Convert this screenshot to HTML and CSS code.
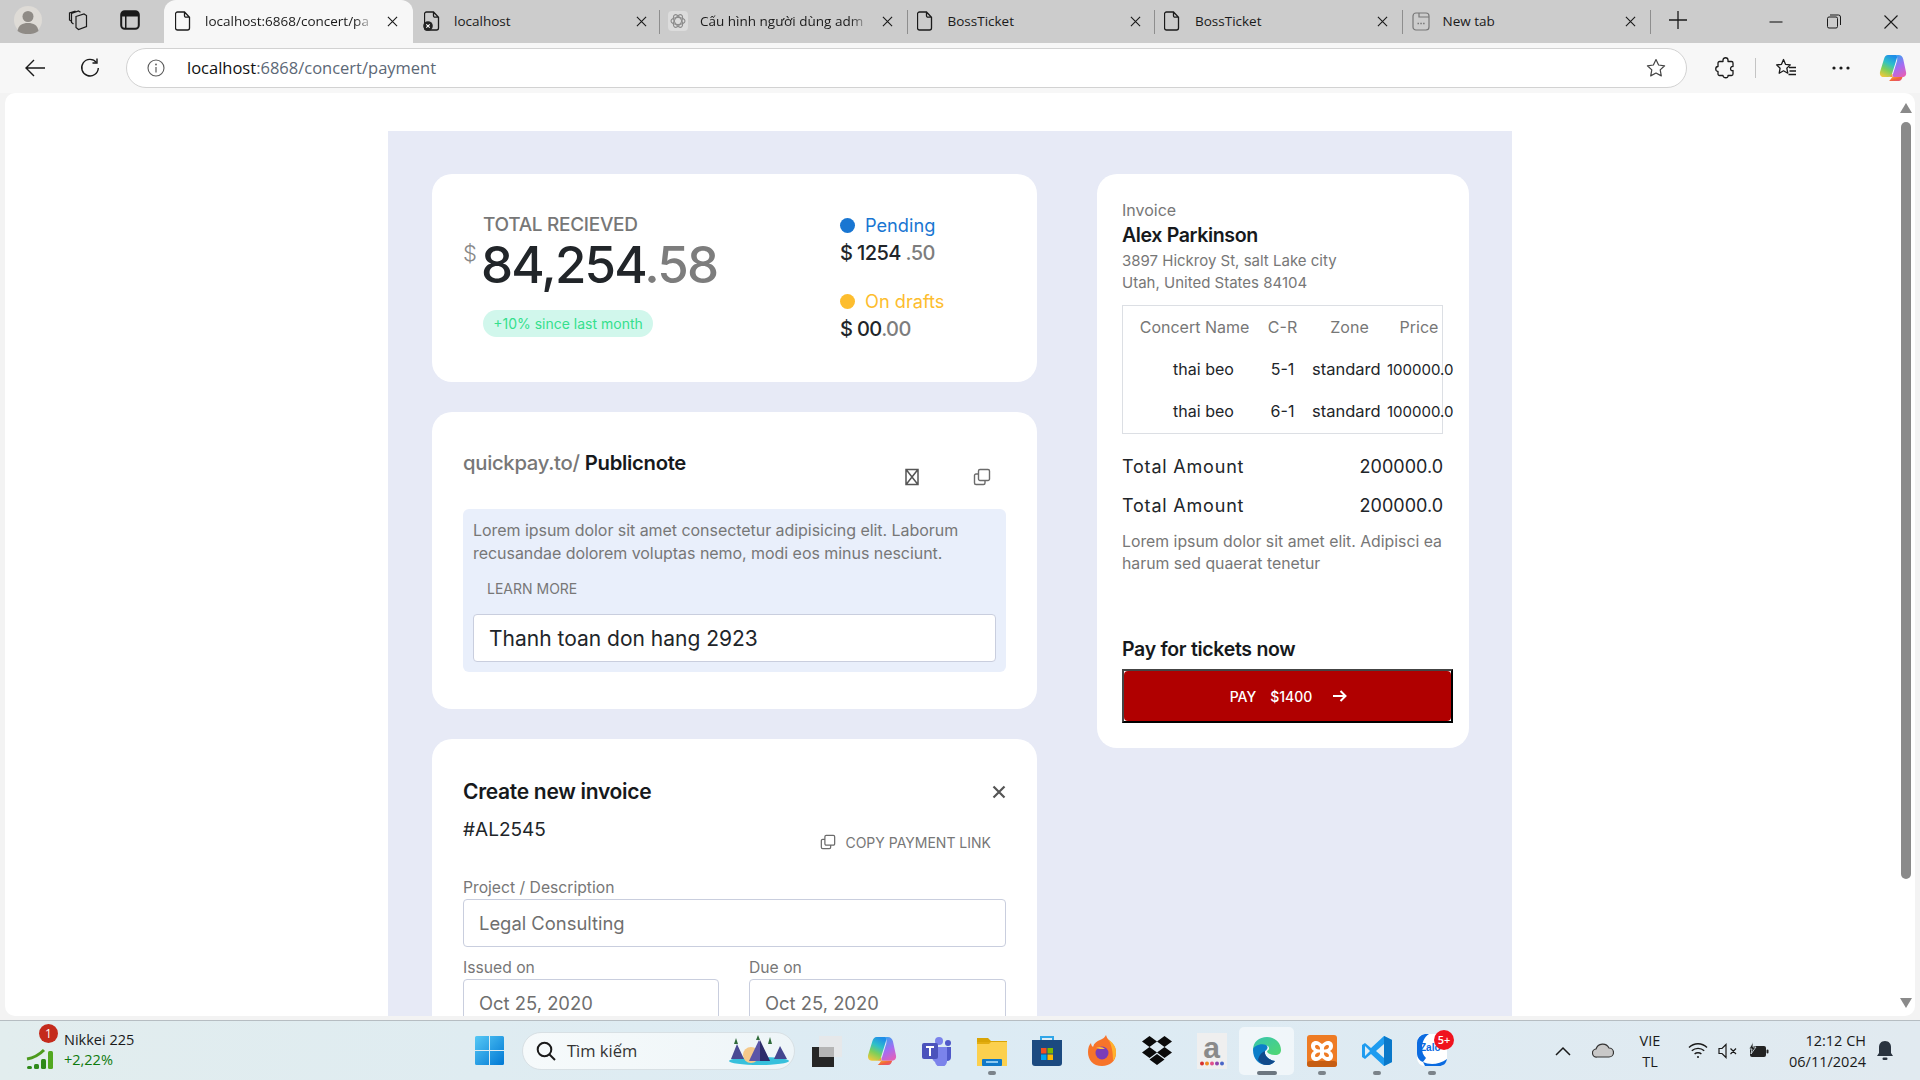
FILE: index.html
```html
<!DOCTYPE html>
<html lang="vi">
<head>
<meta charset="utf-8">
<title>BossTicket</title>
<link rel="stylesheet" href="styles.css">
</head>
<body>
<svg class="defs" width="0" height="0">
  <symbol id="doc" viewBox="0 0 16 20"><path d="M2.5 1h7l5 5.2v10.8a2 2 0 0 1-2 2h-10a2 2 0 0 1-2-2v-14a2 2 0 0 1 2-2zM9.5 1v3.7a1.5 1.5 0 0 0 1.5 1.5h3.5" fill="none" stroke="#1a1a1a" stroke-width="1.3"/></symbol>
  <symbol id="x" viewBox="0 0 12 12"><path d="M1 1l10 10M11 1L1 11" fill="none" stroke="#1a1a1a" stroke-width="1.2"/></symbol>
  <symbol id="copy" viewBox="0 0 18 18"><path d="M7 1.5h8a1.5 1.5 0 0 1 1.5 1.5v8a1.5 1.5 0 0 1-1.5 1.5H7A1.5 1.5 0 0 1 5.500 11V3A1.500 1.500 0 0 1 7 1.500zM5.500 6H3a1.500 1.500 0 0 0-1.500 1.500V15A1.500 1.500 0 0 0 3 16.500h7.500A1.500 1.500 0 0 0 12 15v-2.500" fill="none" stroke="#6b6b6b" stroke-width="1.400"/></symbol>
  <linearGradient id="cop" x1="0.6" y1="0" x2="0.2" y2="1"><stop offset="0" stop-color="#1f8fe8"/><stop offset=".35" stop-color="#2fc0c8"/><stop offset=".65" stop-color="#7ccf5a"/><stop offset="1" stop-color="#f0c93c"/></linearGradient>
  <linearGradient id="cop2" x1="0.4" y1="0" x2="0.8" y2="1"><stop offset="0" stop-color="#3fa0f0"/><stop offset=".5" stop-color="#a56cf2"/><stop offset="1" stop-color="#e85fb4"/></linearGradient>
  <linearGradient id="cop3" x1="0" y1="0" x2="1" y2="1"><stop offset="0" stop-color="#f7b733"/><stop offset=".5" stop-color="#f2653a"/><stop offset="1" stop-color="#e04a8a"/></linearGradient>
  <symbol id="copilot" viewBox="0 0 28 28"><path d="M9 1h8c1.200 0 1.500 .8 1.200 2L13 20c-.6 2-2 3-4 3H4.500C2 23 .5 21 1 18L5 5c.7-2.500 2-4 4-4z" fill="url(#cop)"/><path d="M17 1h2.500c2.500 0 4 1.500 4.700 4L27 18c.7 3-1 5-3.500 5H15c-2 0-1.700-1.500-1-3l4-13c.4-2 .5-4-1-6z" fill="url(#cop2)"/><path d="M10 27h9.500c2.500 0 3.500-2 4-4H14c-1.500 0-1.500 2-4 4z" fill="url(#cop3)"/><path d="M8.500 23c2 0 3.500-1 4-3h1c-.5 2-.5 3 1.500 3z" fill="#f2a03a"/></symbol>
</svg>

<div class="tabbar">
  <div class="tools">
    <div class="tool avatar"><svg width="28" height="28" viewBox="0 0 28 28"><circle cx="14" cy="14" r="14" fill="#dedbd6"/><circle cx="14" cy="10.500" r="5.500" fill="#8f8b86"/><path d="M3.500 25c1-6 5-8 10.500-8s9.500 2 10.500 8c-3 2.500-7 3-10.500 3s-7.500-.5-10.500-3z" fill="#8f8b86"/></svg></div>
    <div class="tool wsp"><svg width="22" height="22" viewBox="0 0 22 22" fill="none" stroke="#1a1a1a" stroke-width="1.200"><path d="M9 7.500l8-2.500 2.500 1.500v11l-8 3-2.500-2z"/><path d="M6.500 15l-2-1.500v-9l7-2.500 2 1.200M4 12L2.500 11V4l6-2"/></svg></div>
    <div class="tool vtab"><svg width="20" height="20" viewBox="0 0 20 20"><rect x="1.200" y="1.200" width="17.600" height="17.600" rx="3.500" fill="none" stroke="#1a1a1a" stroke-width="2"/><path d="M2 2h16v4.500H6.500V18H5V6.500H2z" fill="#1a1a1a"/></svg></div>
  </div>
  <div class="tab active">
    <svg class="fav" width="16" height="20"><use href="#doc"/></svg>
    <span class="tab-title fade">localhost:6868/concert/pa</span>
    <svg class="tab-x" width="11" height="11"><use href="#x"/></svg>
  </div>
  <div class="tab nosep">
    <svg class="fav" width="18" height="20" viewBox="0 0 18 20"><use href="#doc" width="16" height="20" x="1"/><circle cx="5" cy="15" r="4.800" fill="#222"/><path d="M3.300 13.300l3.400 3.400M6.700 13.300l-3.400 3.400" stroke="#fff" stroke-width="1.100"/></svg>
    <span class="tab-title">localhost</span>
    <svg class="tab-x" width="11" height="11"><use href="#x"/></svg>
  </div>
  <div class="tab">
    <svg class="fav fav-wide" width="20" height="20" viewBox="0 0 20 20"><rect width="20" height="20" rx="4" fill="#dcdcdc"/><g fill="none" stroke="#8c8c8c" stroke-width="1.100"><ellipse cx="10" cy="10" rx="7" ry="3.500"/><ellipse cx="10" cy="10" rx="7" ry="3.500" transform="rotate(60 10 10)"/><ellipse cx="10" cy="10" rx="7" ry="3.500" transform="rotate(120 10 10)"/></g></svg>
    <span class="tab-title fade">Cấu hình người dùng adm</span>
    <svg class="tab-x" width="11" height="11"><use href="#x"/></svg>
  </div>
  <div class="tab">
    <svg class="fav" width="16" height="20"><use href="#doc"/></svg>
    <span class="tab-title">BossTicket</span>
    <svg class="tab-x" width="11" height="11"><use href="#x"/></svg>
  </div>
  <div class="tab">
    <svg class="fav" width="16" height="20"><use href="#doc"/></svg>
    <span class="tab-title">BossTicket</span>
    <svg class="tab-x" width="11" height="11"><use href="#x"/></svg>
  </div>
  <div class="tab">
    <svg class="fav" width="18" height="20" viewBox="0 0 18 20"><rect x="1" y="2" width="16" height="17" rx="3" fill="none" stroke="#777" stroke-width="1.200"/><path d="M7 2v4h10" fill="none" stroke="#777" stroke-width="1.200"/><path d="M5.500 12.500h1.500M8.300 12.500h1.500M11.100 12.500h1.500" stroke="#777" stroke-width="1.300"/></svg>
    <span class="tab-title">New tab</span>
    <svg class="tab-x" width="11" height="11"><use href="#x"/></svg>
  </div>
  <div class="newtab"><svg width="18" height="18" viewBox="0 0 18 18"><path d="M9 0v18M0 9h18" stroke="#1a1a1a" stroke-width="1.300"/></svg></div>
  <div class="winbtns">
    <div class="winbtn"><svg width="14" height="14" viewBox="0 0 14 14"><path d="M.5 7h13" stroke="#1a1a1a" stroke-width="1.100"/></svg></div>
    <div class="winbtn"><svg width="14" height="15" viewBox="0 0 14 15" fill="none" stroke="#1a1a1a" stroke-width="1"><rect x=".5" y="3" width="10" height="11" rx="1.500"/><path d="M3 1h8.500a2 2 0 0 1 2 2v8"/></svg></div>
    <div class="winbtn"><svg width="14" height="14" viewBox="0 0 14 14"><path d="M.5.5l13 13M13.500.5l-13 13" stroke="#1a1a1a" stroke-width="1.100"/></svg></div>
  </div>
</div>

<div class="toolbar">
  <div class="nav-btn back"><svg width="20" height="18" viewBox="0 0 20 18"><path d="M20 9H1.500M9 1L1 9l8 8" fill="none" stroke="#1a1a1a" stroke-width="1.400"/></svg></div>
  <div class="nav-btn reload"><svg width="20" height="20" viewBox="0 0 20 20" fill="none" stroke="#1a1a1a" stroke-width="1.400"><path d="M16.500 4.500A8.300 8.300 0 1 0 18.300 10"/><path d="M17 .5v4.500h-4.500"/></svg></div>
  <div class="address">
    <svg class="info" width="18" height="18" viewBox="0 0 18 18"><circle cx="9" cy="9" r="8" fill="none" stroke="#5a5a5a" stroke-width="1.100"/><path d="M9 8v5.500" stroke="#5a5a5a" stroke-width="1.200"/><circle cx="9" cy="5.500" r=".9" fill="#5a5a5a"/></svg>
    <span class="url"><span class="url-host">localhost</span>:6868/concert/payment</span>
    <svg class="star" width="20" height="20" viewBox="0 0 20 20"><path d="M10 1.500l2.600 5.500 6 .8-4.400 4.100 1.100 6L10 15l-5.300 2.900 1.100-6L1.400 7.800l6-.8z" fill="none" stroke="#444" stroke-width="1.200" stroke-linejoin="round"/></svg>
  </div>
  <div class="tb-icon ext"><svg width="20" height="22" viewBox="0 0 20 22"><path d="M8 3c0-3 5-3 5 0v1.500h3.500a1.500 1.500 0 0 1 1.500 1.500v3.500c-3-.8-3.500 5 0 4v3.500a1.500 1.500 0 0 1-1.500 1.500H13c.8 3-5 3-5 0H4.500A1.500 1.500 0 0 1 3 17v-2.500c-3 0-3-5 0-5V6a1.500 1.500 0 0 1 1.500-1.500H8z" fill="none" stroke="#1a1a1a" stroke-width="1.300" stroke-linejoin="round"/></svg></div>
  <div class="tb-sep"></div>
  <div class="tb-icon fav2"><svg width="22" height="20" viewBox="0 0 22 20" fill="none" stroke="#1a1a1a" stroke-width="1.300"><path d="M8.500 1.500l2 4.800 4.800.6-3.500 3.300 1 5-4.300-2.400-4.300 2.400.9-5L1.600 6.900l4.900-.6z" stroke-linejoin="round"/><path d="M14 9.500h7M14.500 13h6.500M13.500 16.500h7.500"/></svg></div>
  <div class="tb-icon dots"><svg width="18" height="4" viewBox="0 0 18 4" fill="#1a1a1a"><circle cx="2" cy="2" r="1.600"/><circle cx="9" cy="2" r="1.600"/><circle cx="16" cy="2" r="1.600"/></svg></div>
  <div class="tb-icon copi"><svg width="28" height="28"><use href="#copilot"/></svg></div>
</div>

<div class="browser-body">
  <div class="viewport">
    <main class="panel">
      <div class="col-left">
        <section class="card summary">
          <div class="stat">
            <div class="stat-label">TOTAL RECIEVED</div>
            <div class="stat-amount"><span class="cur">$</span><span class="big">84,254<span class="muted">.58</span></span></div>
            <span class="badge">+10% since last month</span>
          </div>
          <div class="status">
            <div class="status-label pending"><i class="dot dot-blue"></i>Pending</div>
            <div class="status-val">$ 1254 <span class="muted">.50</span></div>
            <div class="status-label drafts"><i class="dot dot-amber"></i>On drafts</div>
            <div class="status-val">$ 00<span class="muted">.00</span></div>
          </div>
        </section>

        <section class="card note">
          <div class="note-head">
            <div class="note-title"><span class="note-url">quickpay.to/</span> <span class="note-name">Publicnote</span></div>
            <div class="note-actions">
              <svg width="18" height="18" viewBox="0 0 18 18" fill="none" stroke="#555" stroke-width="1.500"><path d="M3 1.500h12v15H3zM3.500 2L14.500 16M14.500 2L3.500 16"/></svg>
              <svg width="18" height="18"><use href="#copy"/></svg>
            </div>
          </div>
          <div class="note-box">
            <p class="note-text">Lorem ipsum dolor sit amet consectetur adipisicing elit. Laborum recusandae dolorem voluptas nemo, modi eos minus nesciunt.</p>
            <div class="learn">LEARN MORE</div>
            <div class="field field-note">Thanh toan don hang 2923</div>
          </div>
        </section>

        <section class="card create">
          <div class="create-head">
            <h2 class="create-title">Create new invoice</h2>
            <svg width="14" height="14" viewBox="0 0 14 14"><path d="M1.500 1.500l11 11M12.500 1.500l-11 11" stroke="#555" stroke-width="2.200"/></svg>
          </div>
          <div class="create-sub">
            <span class="inv-no">#AL2545</span>
            <span class="copy-link"><svg width="16" height="16"><use href="#copy"/></svg>COPY PAYMENT LINK</span>
          </div>
          <label class="lbl">Project / Description</label>
          <div class="field">Legal Consulting</div>
          <div class="dates">
            <div>
              <label class="lbl">Issued on</label>
              <div class="field">Oct 25, 2020</div>
            </div>
            <div>
              <label class="lbl">Due on</label>
              <div class="field">Oct 25, 2020</div>
            </div>
          </div>
        </section>
      </div>

      <aside class="card invoice">
        <div class="inv-cap">Invoice</div>
        <div class="inv-name">Alex Parkinson</div>
        <div class="inv-addr">3897 Hickroy St, salt Lake city<br>Utah, United States 84104</div>
        <div class="table-box">
          <table class="tickets">
            <thead><tr><th>Concert Name</th><th>C-R</th><th>Zone</th><th>Price</th></tr></thead>
            <tbody>
              <tr><td>thai beo</td><td>5-1</td><td>standard</td><td>100000.0</td></tr>
              <tr><td>thai beo</td><td>6-1</td><td>standard</td><td>100000.0</td></tr>
            </tbody>
          </table>
        </div>
        <div class="total first"><span class="total-lbl">Total Amount</span><span>200000.0</span></div>
        <div class="total"><span class="total-lbl">Total Amount</span><span>200000.0</span></div>
        <p class="inv-note">Lorem ipsum dolor sit amet elit. Adipisci ea harum sed quaerat tenetur</p>
        <div class="pay-title">Pay for tickets now</div>
        <button class="pay"><span class="pay-in"><span>PAY</span><span class="pay-amt">$1400</span><svg width="14" height="12" viewBox="0 0 14 12"><path d="M0 6h12M7.500 1l5 5-5 5" fill="none" stroke="#fff" stroke-width="2"/></svg></span></button>
      </aside>
    </main>
  </div>
  <div class="scrollbar">
    <svg width="12" height="10" viewBox="0 0 12 10"><path d="M6 0l6 10H0z" fill="#8a8a8a"/></svg>
    <div class="thumb"></div>
    <svg width="12" height="10" viewBox="0 0 12 10"><path d="M6 10L12 0H0z" fill="#8a8a8a"/></svg>
  </div>
</div>

<footer class="taskbar">
  <div class="widget">
    <div class="w-icon">
      <svg width="28" height="26" viewBox="0 0 28 26"><path d="M1 15c6-1 12-4 17-9" fill="none" stroke="#4c9a1e" stroke-width="3"/><rect x="1" y="22" width="5" height="3" rx="1.500" fill="#2f8a1a"/><rect x="8" y="20" width="5" height="5" rx="1.500" fill="#2f8a1a"/><rect x="15" y="15" width="5" height="10" rx="1.500" fill="#2f8a1a"/><rect x="22" y="7" width="5" height="18" rx="1.500" fill="#52a820"/></svg>
      <span class="w-badge">1</span>
    </div>
    <div class="w-text"><div>Nikkei 225</div><div class="w-up">+2,22%</div></div>
  </div>
  <div class="start"><svg width="29" height="29" viewBox="0 0 29 29"><defs><linearGradient id="win" x1="0" y1="0" x2="1" y2="1"><stop offset="0" stop-color="#56c8f5"/><stop offset="1" stop-color="#0078d4"/></linearGradient></defs><path fill="url(#win)" d="M0 1.500A1.500 1.500 0 0 1 1.500 0H14v14H0zM15 0h12.500A1.500 1.500 0 0 1 29 1.500V14H15zM0 15h14v14H1.500A1.500 1.500 0 0 1 0 27.500zM15 15h14v12.500a1.500 1.500 0 0 1-1.500 1.500H15z"/></svg></div>
  <div class="search">
    <svg width="20" height="20" viewBox="0 0 20 20" fill="none" stroke="#1a1a1a" stroke-width="2"><circle cx="8.500" cy="8.500" r="6.800"/><path d="M13.500 13.500l5.500 5.500"/></svg>
    <span class="search-text">Tìm kiếm</span>
    <svg class="scene" width="60" height="32" viewBox="0 0 60 32"><ellipse cx="30" cy="26" rx="30" ry="4" fill="#37c0dc"/><ellipse cx="22" cy="20" rx="8" ry="8" fill="#f5c98a"/><path d="M2 24l6-15 7 15z" fill="#4a4a94"/><path d="M20 26l10-21 11 21z" fill="#5b55a8"/><path d="M31 5l10 21H31z" fill="#2d2b6a"/><path d="M45 24l6-13 7 13z" fill="#44468f"/><path d="M29 0l2 5h-4zM41 2l2 7h-4zM7 3l2 6H5z" fill="#2f6b3a"/></svg>
  </div>
  <div class="apps">
    <div class="app"><svg width="32" height="32" viewBox="0 0 32 32"><rect x="1" y="12" width="22" height="20" fill="#262626"/><rect x="8" y="1" width="23" height="21" fill="#e8e8e8" opacity=".85"/><rect x="8" y="12" width="15" height="10" fill="#b5b5b5"/></svg></div>
    <div class="app"><svg width="30" height="30" viewBox="0 0 28 28"><use href="#copilot"/></svg></div>
    <div class="app"><svg width="30" height="30" viewBox="0 0 30 30"><circle cx="17" cy="5" r="4" fill="#7b83eb"/><circle cx="26" cy="7" r="3" fill="#5059c9"/><path d="M21 11h8v10a4 4 0 0 1-8 0z" fill="#5059c9"/><path d="M10 11h15v13a6 6 0 0 1-12 2 6 6 0 0 1-3-5z" fill="#7b83eb"/><rect y="7" width="16" height="16" rx="2" fill="#4b53bc"/><path d="M4 11h8M8 11v9" stroke="#fff" stroke-width="2"/></svg></div>
    <div class="app on"><svg width="30" height="30" viewBox="0 0 30 30"><path d="M0 2h11l3 3h16v4H0z" fill="#d9a406"/><rect y="6" width="30" height="24" fill="#fcd04e"/><path d="M0 6h14l-2 2H0z" fill="#e3ad10"/><rect x="5" y="23" width="20" height="7" rx="1" fill="#0f78c9"/><rect x="9" y="25" width="12" height="2" fill="#8cc8f0"/></svg></div>
    <div class="app"><svg width="30" height="32" viewBox="0 0 30 32"><path d="M9 6V2h12v4" fill="none" stroke="#30a6e8" stroke-width="2"/><path d="M0 5h30v23a3 3 0 0 1-3 3H3a3 3 0 0 1-3-3z" fill="#1c4a80"/><rect x="9" y="13" width="5.500" height="5.500" fill="#f25022"/><rect x="15.500" y="13" width="5.500" height="5.500" fill="#7fba00"/><rect x="9" y="19.500" width="5.500" height="5.500" fill="#00a4ef"/><rect x="15.500" y="19.500" width="5.500" height="5.500" fill="#ffb900"/></svg></div>
    <div class="app"><svg width="30" height="32" viewBox="0 0 30 32"><path d="M15 31C6 31 1 25 1 17c0-4 1-7 3-9 0 2 1 3 2 4 1-4 4-6 7-7 3-1 5-3 6-5 1 4 3 5 6 8 3 3 4 6 4 10 0 8-6 13-14 13z" fill="#f7742a"/><path d="M21 4c4 3 8 7 8 13 0 4-1 6-3 9 0-8-1-16-5-22z" fill="#ffb22e"/><circle cx="15" cy="18" r="6.500" fill="#7a3db8"/><path d="M9 13c3-2 7-1 9 1-3 0-7 0-9-1z" fill="#ffbf3a"/></svg></div>
    <div class="app"><svg width="30" height="32" viewBox="0 0 30 32" fill="#0b0b0b"><path d="M7.500 1L15 6.500 7.500 12 0 6.500zM22.500 1L30 6.500 22.500 12 15 6.500zM7.500 12L15 17.500 7.500 23 0 17.500zM22.500 12L30 17.500 22.500 23 15 17.500zM15 19l7.500 5.500L15 30l-7.500-5.500z"/></svg></div>
    <div class="app"><div class="amazon"><span class="amazon-a">a</span><svg width="24" height="5" viewBox="0 0 24 5"><circle cx="2" cy="2.500" r="2" fill="#d6312e"/><circle cx="7" cy="2.500" r="2" fill="#ef8a22"/><circle cx="12" cy="2.500" r="2" fill="#e0508c"/><circle cx="17" cy="2.500" r="2" fill="#8e44ad"/><circle cx="22" cy="2.500" r="2" fill="#4a66c8"/></svg></div></div>
    <div class="app cur-app"><svg width="30" height="32" viewBox="0 0 30 32"><defs><linearGradient id="edge" x1="0" y1="0" x2="1" y2="1"><stop offset="0" stop-color="#36c4b0"/><stop offset="1" stop-color="#52d870"/></linearGradient></defs><path d="M1 15C1 7 7 2 15 2c8 0 14 6 14 13 0 3-2 5-6 5-5 0-8-2-8-4 2-1 3-3 1-5-4-2-12 0-15 4z" fill="url(#edge)"/><path d="M1 15c0-4 8-7 13-5 3 2 1 5-1 6-1 4 3 9 10 10-2 3-5 4-8 4C7 30 1 24 1 15z" fill="#0c7ec9"/><path d="M13 16c-1 4 3 9 10 10-2 3-5 4-8 4-4 0-7-2-9-5 1-5 4-8 7-9z" fill="#114a8b"/></svg></div>
    <div class="app on"><svg width="30" height="32" viewBox="0 0 30 32"><rect width="30" height="32" rx="3" fill="#ee7b24"/><rect y="26" width="30" height="6" rx="3" fill="#c65d12"/><path d="M9 6c2.500 0 4 1.500 6 3 2-1.500 3.500-3 6-3 3.500 0 5 2.500 5 5 0 2-1 4-3 5 2 1 3 3 3 5 0 2.500-1.500 5-5 5-2.500 0-4-1.500-6-3-2 1.500-3.500 3-6 3-3.500 0-5-2.500-5-5 0-2 1-4 3-5-2-1-3-3-3-5 0-2.500 1.500-5 5-5z" fill="#fff"/><path d="M9.500 10c2 0 4 2 3.500 4.500-2.500.5-5-1-5-3 0-1 .7-1.500 1.500-1.500zM20.500 10c-2 0-4 2-3.500 4.500 2.500.5 5-1 5-3 0-1-.7-1.500-1.500-1.500zM9.500 22c2 0 4-2 3.500-4.500-2.500-.5-5 1-5 3 0 1 .7 1.500 1.500 1.500zM20.500 22c-2 0-4-2-3.500-4.500 2.500-.5 5 1 5 3 0 1-.7 1.500-1.500 1.500z" fill="#ee7b24"/></svg></div>
    <div class="app on"><svg width="30" height="32" viewBox="0 0 30 32"><path d="M22 1l8 4v22l-8 4-13-12-6 5-3-2V10l3-2 6 5z" fill="#1f9cf0"/><path d="M22 1v30l8-4V5z" fill="#0a78c9"/><path d="M22 9l-8 7 8 7z" fill="#e0ecf2"/><path d="M3 11l-0 10 5-5z" fill="#e0ecf2"/></svg></div>
    <div class="app on zalo"><svg width="30" height="36" viewBox="0 0 30 36"><path d="M8 1h14a8 8 0 0 1 8 8v16a8 8 0 0 1-8 8H8a8 8 0 0 1-8-8V9a8 8 0 0 1 8-8z" fill="#fff"/><path d="M0 10a9 9 0 0 1 8-9h4c-5 3-7 9-7 14 0 4 1 7 4 10l-3 4c-3-1-6-4-6-9zM6 29c6 3 16 3 24-3-1 5-4 7-8 7H8z" fill="#0b6be0"/></svg><span class="zalo-text">Zalo</span><span class="zalo-badge">5+</span></div>
  </div>
  <div class="tray">
    <div class="tray-i tw40"><svg width="16" height="10" viewBox="0 0 16 10"><path d="M1 9l7-7 7 7" fill="none" stroke="#1a1a1a" stroke-width="1.500"/></svg></div>
    <div class="tray-i tw40"><svg width="22" height="15" viewBox="0 0 22 15"><path d="M5 14a4 4 0 0 1-1-8 7 7 0 0 1 13-1 4.500 4.500 0 0 1 0 9z" fill="#c8c8c8" stroke="#333" stroke-width="1.200"/></svg></div>
    <div class="lang"><div>VIE</div><div>TL</div></div>
    <div class="tray-i tw30 mw"><svg width="20" height="17" viewBox="0 0 20 17" fill="none" stroke="#1a1a1a" stroke-width="1.400"><path d="M1 5.500c5-5 13-5 18 0M3.800 8.800c3.500-3.300 9-3.300 12.400 0M6.600 12c1.800-1.600 5-1.600 6.800 0"/><circle cx="10" cy="15" r="1" fill="#1a1a1a" stroke="none"/></svg></div>
    <div class="tray-i tw30"><svg width="20" height="16" viewBox="0 0 20 16" fill="none" stroke="#1a1a1a" stroke-width="1.200"><path d="M1 5.500h3L8 1.500v13L4 10.500H1zM12.500 5.500l5.500 5.500M18 5.500L12.500 11"/></svg></div>
    <div class="tray-i tw30"><svg width="21" height="17" viewBox="0 0 21 17"><rect x="2" y="4" width="16" height="11" rx="2" fill="#222"/><rect x="18.500" y="7.500" width="2" height="4" rx="1" fill="#222"/><path d="M5 0L1 7h3l-1 5 5-7H5z" fill="#222" stroke="#e0ecf2" stroke-width=".8"/></svg></div>
    <div class="clock"><div>12:12 CH</div><div>06/11/2024</div></div>
    <div class="tray-i bell"><svg width="16" height="20" viewBox="0 0 16 20"><path d="M8 0c4 0 6 3 6 6v6l2 3H0l2-3V6c0-3 2-6 6-6z" fill="#2a3440"/><rect x="5.500" y="16.500" width="5" height="2.500" rx="1.200" fill="#2a3440"/></svg></div>
  </div>
</footer>
</body>
</html>
```

FILE: styles.css
```css
* { box-sizing: border-box; }
html, body { margin: 0; padding: 0; height: 100%; overflow: hidden; }
body { width: 1920px; height: 1080px; display: flex; flex-direction: column; background: #f3f3f3; font-family: "Inter", "Liberation Sans", sans-serif; color: #212529; }
.defs { position: absolute; }

/* Browser tab strip */
.tabbar { height: 43px; background: #cccccc; display: flex; flex: none; font-family: "Open Sans", "Noto Sans", sans-serif; }
.tools { width: 164px; display: flex; align-items: center; padding-bottom: 3px; }
.tool { display: flex; justify-content: center; }
.avatar { margin-left: 14px; width: 28px; }
.wsp { margin-left: 25px; width: 22px; }
.vtab { margin-left: 31px; width: 20px; }
.tab { width: 247.500px; height: 43px; display: grid; grid-template-columns: 31px 170px; align-items: center; padding: 0 0 2px 10px; position: relative; font-size: 13.500px; color: #1a1a1a; flex: none; }
.tab::before { content: ""; position: absolute; left: 0; top: 10px; height: 24px; width: 1px; background: #8e8e8e; }
.tab.active { background: #f7f7f7; border-radius: 12px 12px 0 0; width: 249px; padding-left: 11px; grid-template-columns: 30px 170px; }
.tab.active::before, .tab.nosep::before { display: none; }
.tab.nosep { width: 246px; }
.fav { flex: none; }
.fav-wide { margin-left: -1px; }
.tab-title { white-space: nowrap; overflow: hidden; }
.fade { -webkit-mask-image: linear-gradient(90deg, #000 88%, transparent); mask-image: linear-gradient(90deg, #000 88%, transparent); }
.tab-x { position: absolute; left: 223px; top: 16px; }
.newtab { width: 56px; display: flex; align-items: center; justify-content: center; padding-bottom: 4px; border-left: 1px solid transparent; position: relative; }
.newtab::before { content: ""; position: absolute; left: 0; top: 10px; height: 24px; width: 1px; background: #8e8e8e; }
.winbtns { margin-left: auto; display: flex; padding-bottom: 4px; margin-right: 0; }
.winbtn { width: 57.500px; display: flex; align-items: center; justify-content: center; height: 43px; }

/* Toolbar */
.toolbar { height: 50px; background: #f7f7f7; display: flex; align-items: center; flex: none; position: relative; padding-bottom: 1px; }
.nav-btn { display: flex; justify-content: center; }
.back { margin-left: 25px; width: 20px; }
.reload { margin-left: 35px; width: 20px; }
.address { margin-left: 26px; width: 1561px; height: 40px; background: #fff; border: 1.500px solid #d2d2d2; border-radius: 20px; display: flex; align-items: center; padding: 0 20px 0 20px; font-family: "Open Sans", "Noto Sans", sans-serif; }
.url { margin-left: 22px; font-size: 16.500px; color: #5c6876; }
.url-host { color: #111; }
.star { margin-left: auto; }
.tb-icon { display: flex; justify-content: center; }
.ext { margin-left: 27px; width: 22px; }
.tb-sep { margin-left: 19px; width: 1px; height: 20px; background: #c4c4c4; }
.fav2 { margin-left: 19px; width: 22px; }
.dots { margin-left: 35px; width: 18px; }
.copi { margin-left: 29px; width: 28px; }

/* Browser content area */
.browser-body { flex: none; height: 927px; background: #f3f3f3; display: flex; padding: 0 5px 4px; }
.viewport { width: 1890px; background: #fff; border-radius: 10px 0 0 10px; overflow: hidden; padding-top: 38px; }
.scrollbar { width: 20px; background: #fff; border-radius: 0 10px 10px 0; display: flex; flex-direction: column; align-items: center; padding: 10px 0 8px 2px; }
.thumb { width: 10px; height: 757px; margin: 9px 0 auto; background: #8a8a8a; border-radius: 5px; }

.panel { width: 1124px; margin: 0 auto; background: #e7eaf6; padding: 43px 43px 43px 44px; display: grid; grid-template-columns: 605px 372px; column-gap: 60px; align-items: start; }
.col-left { display: flex; flex-direction: column; gap: 30px; }
.card { background: #fff; border-radius: 20px; }
.muted { color: #7d7d7d; }

/* Summary */
.summary { display: flex; justify-content: space-between; padding: 31px 31px 39px; }
.stat-label { margin-top: 8px; padding-left: 20px; font-size: 19px; line-height: 24px; font-weight: 500; color: #777; letter-spacing: -.3px; }
.stat-amount { display: flex; margin-top: -2px; }
.cur { width: 18px; font-size: 22px; line-height: 36px; color: #888; font-weight: 300; }
.big { font-size: 51px; line-height: 60px; font-weight: 500; color: #212529; letter-spacing: -1.800px; }
.badge { display: block; margin: 15px 0 0 20px; height: 27px; width: 170px; border-radius: 14px; background: #d1f7ec; color: #35df8d; font-size: 14px; line-height: 27px; text-align: center; white-space: nowrap; }
.status { width: 166px; }
.status-label { display: flex; align-items: center; gap: 10px; font-size: 18.200px; line-height: 24px; margin-top: 22px; }
.status-label:first-child { margin-top: 8px; }
.pending { color: #1976d2; }
.drafts { color: #fdbd2e; }
.dot { width: 15px; height: 15px; border-radius: 50%; display: block; }
.dot-blue { background: #1976d2; }
.dot-amber { background: #fdbd2e; }
.status-val { margin-top: 2px; font-size: 20px; line-height: 28px; font-weight: 500; color: #212529; letter-spacing: -.6px; }

/* Note */
.note { padding: 31px 31px 37px; }
.note-head { display: flex; justify-content: space-between; height: 66px; }
.note-title { margin-top: 5px; font-size: 20.300px; line-height: 30px; font-weight: 500; white-space: nowrap; letter-spacing: -.3px; }
.note-url { color: #777; }
.note-name { color: #16191c; font-weight: 600; }
.note-actions { display: flex; gap: 52px; margin-top: 25px; padding-right: 15px; height: 18px; }
.note-box { background: #e9effb; border-radius: 6px; padding: 10px; }
.note-text { margin: 0; font-size: 16px; line-height: 23px; color: #777; letter-spacing: -.05px; }
.learn { margin-top: 14px; padding-left: 14px; font-size: 14px; line-height: 20px; color: #777; }
.field { height: 48px; background: #fff; border: 1px solid #c9cede; border-radius: 4px; padding: 0 15px; display: flex; align-items: center; font-size: 18.400px; color: #6f6f6f; }
.field-note { margin-top: 15px; font-size: 21px; color: #212529; }

/* Create invoice */
.create { padding: 31px 31px 40px; }
.create-head { display: flex; justify-content: space-between; align-items: center; margin-top: 7px; height: 30px; padding-right: 0; }
.create-title { margin: 0; font-size: 21px; line-height: 30px; font-weight: 600; color: #16191c; letter-spacing: -.3px; }
.create-sub { display: flex; justify-content: space-between; margin-top: 8px; height: 37px; padding-right: 15px; }
.inv-no { font-size: 19px; line-height: 30px; color: #212529; }
.copy-link { display: flex; align-items: center; gap: 9px; margin-top: 17px; height: 20px; font-size: 14px; color: #777; }
.lbl { display: block; font-size: 15.700px; line-height: 22px; color: #777; }
.create-sub + .lbl { margin-top: 25px; }
.dates { display: grid; grid-template-columns: 256px 257px; column-gap: 30px; margin-top: 10px; }

/* Invoice */
.invoice { padding: 25px 16px 25px 25px; }
.inv-cap { font-size: 16px; line-height: 22px; color: #777; }
.inv-name { font-size: 19.600px; line-height: 28px; font-weight: 600; color: #16191c; letter-spacing: -.4px; }
.inv-addr { margin-top: 1px; font-size: 15px; line-height: 22px; color: #777; }
.table-box { margin-top: 11px; width: 321px; height: 129px; border: 1px solid #dcdfe4; }
.tickets { table-layout: fixed; width: 328px; border-collapse: collapse; font-size: 16px; }
.tickets tr { height: 42px; }
.tickets th, .tickets td { padding: 0; text-align: center; white-space: nowrap; font-weight: 400; }
.tickets th { color: #777; }
.tickets td { color: #212529; }
.tickets th:nth-child(1) { width: 130px; padding-left: 13px; }
.tickets th:nth-child(2) { width: 59px; }
.tickets th:nth-child(3) { width: 75px; }
.tickets th:nth-child(4) { width: 64px; }
.tickets td:nth-child(1) { padding-left: 31px; }
.tickets td:nth-child(3) { padding-right: 9px; font-size: 16.500px; }
.tickets td:nth-child(4) { font-size: 15px; }
.total { display: flex; justify-content: space-between; width: 321px; margin-top: 11px; font-size: 18px; line-height: 28px; color: #212529; }
.total-lbl { letter-spacing: .8px; }
.total.first { margin-top: 19px; }
.inv-note { margin: 11px 0 0; width: 326px; font-size: 15.800px; line-height: 22px; color: #777; }
.pay-title { margin-top: 60px; font-size: 19.500px; line-height: 28px; font-weight: 600; color: #16191c; letter-spacing: -.3px; }
.pay { display: block; margin-top: 6px; width: 331px; height: 54px; padding: 0; background: #fff; border: 2px solid; border-color: #444 #000 #000 #444; font-family: inherit; }
.pay-in { height: 100%; background: #b00000; border-radius: 4px; display: flex; align-items: center; justify-content: center; gap: 14px; color: #fff; font-size: 14px; font-weight: 500; padding-left: 2px; }
.pay-amt { margin-right: 7px; }

/* Taskbar */
.taskbar { flex: none; height: 60px; display: flex; align-items: center; border-top: 1.500px solid #b6bdc2; background: linear-gradient(90deg, #e2edee, #dcebf4 50%, #e1eaf0); font-family: "Open Sans", "Noto Sans", sans-serif; color: #1a1a1a; }
.widget { width: 475px; display: flex; align-items: center; padding-left: 26px; flex: none; }
.w-icon { position: relative; width: 28px; height: 26px; margin-top: 12px; }
.w-badge { position: absolute; left: 13px; top: -20px; width: 19px; height: 19px; border-radius: 50%; background: #c42b1c; color: #fff; font-size: 12px; line-height: 19px; text-align: center; }
.w-text { margin-left: 10px; margin-bottom: 2px; font-size: 14.500px; line-height: 20px; }
.w-up { color: #0e7a0d; }
.start { width: 29px; height: 29px; flex: none; }
.search { margin-left: 18px; width: 273px; height: 38px; border-radius: 19px; background: linear-gradient(90deg, #f6fafb, #eef5f8); border: 1px solid #d8e0e4; display: flex; align-items: center; padding: 0 5px 0 13px; flex: none; }
.search-text { margin-left: 11px; margin-bottom: 1px; font-size: 16.500px; color: #333; }
.scene { margin-left: auto; }
.apps { display: flex; margin-left: 4px; flex: none; }
.app { width: 55px; height: 48px; display: flex; align-items: center; justify-content: center; position: relative; }
.app.on::after, .cur-app::after { content: ""; position: absolute; left: 50%; bottom: 0; width: 8px; height: 4px; margin-left: -4px; border-radius: 2px; background: #7b838a; }
.cur-app { background: rgba(255,255,255,.55); border-radius: 5px; }
.cur-app::after { width: 20px; margin-left: -10px; background: #6c7680; }
.amazon { width: 30px; height: 36px; background: #efefef; display: flex; flex-direction: column; align-items: center; justify-content: flex-end; padding-bottom: 3px; }
.amazon-a { font-family: "Liberation Sans", sans-serif; font-size: 30px; line-height: 26px; color: #8a8a8a; font-weight: 700; }
.zalo-text { position: absolute; left: 16px; top: 15px; font-size: 10px; line-height: 12px; color: #0b6be0; font-weight: 700; font-family: "Liberation Sans", sans-serif; }
.zalo-badge { position: absolute; left: 30px; top: 3px; width: 20px; height: 20px; border-radius: 50%; background: #f0131e; color: #fff; font-size: 11px; line-height: 20px; text-align: center; font-weight: 600; }
.tray { margin-left: auto; display: flex; align-items: center; padding-right: 16px; flex: none; }
.tray-i { display: flex; justify-content: center; align-items: center; }
.tw40 { width: 40px; }
.tw30 { width: 30px; }
.mw { margin-left: 6px; }
.lang { width: 54px; text-align: center; font-size: 14.500px; line-height: 21px; }
.clock { width: 93px; text-align: right; font-size: 14.500px; line-height: 21px; white-space: nowrap; }
.bell { width: 38px; }
```
